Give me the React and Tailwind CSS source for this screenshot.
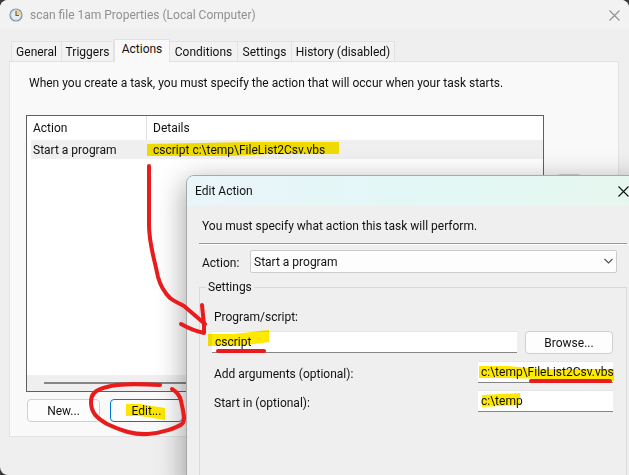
import React from "react";

const tabs = [
  { name: "General", width: "w-[51px]" },
  { name: "Triggers", width: "w-[52px]" },
  { name: "Actions", width: "w-[56px]", active: true },
  { name: "Conditions", width: "w-[68px]" },
  { name: "Settings", width: "w-[54px]" },
  { name: "History (disabled)", width: "w-[103px]" },
];

function ClockIcon() {
  return (
    <svg width="14" height="14" viewBox="0 0 14 14" aria-hidden="true">
      <circle cx="7" cy="7" r="6" fill="#e3edf3" stroke="#8b8f92" strokeWidth="1.2" />
      <path d="M7 7V2a5 5 0 0 1 5 5z" fill="#f6cf7a" />
      <circle cx="7" cy="7" r="4.8" fill="none" stroke="#c3d4df" strokeWidth="0.8" />
      <path d="M7 3v4.5h3" fill="none" stroke="#55616b" strokeWidth="1.1" />
    </svg>
  );
}

function CloseIcon() {
  return (
    <svg width="11" height="11" viewBox="0 0 11 11" aria-hidden="true">
      <path d="M0.5 0.5l10 10M10.5 0.5l-10 10" fill="none" stroke="currentColor" strokeWidth="1.1" />
    </svg>
  );
}

function Tabs() {
  return (
    <div role="tablist" className="flex h-[23px] items-end pl-[2px]">
      {tabs.map((tab) => (
        <button
          key={tab.name}
          type="button"
          role="tab"
          aria-selected={!!tab.active}
          className={
            tab.active
              ? `${tab.width} relative z-10 -mb-px h-[23px] shrink-0 border border-b-0 border-[#e2e2e2] bg-[#f9f9f9] pb-1 whitespace-nowrap`
              : `${tab.width} h-5 shrink-0 border border-b-0 border-l-0 border-[#e2e2e2] bg-[#f2f2f2] whitespace-nowrap first:border-l`
          }
        >
          {tab.name}
        </button>
      ))}
    </div>
  );
}

function ActionList() {
  return (
    <div className="flex h-[277px] flex-1 flex-col border border-[#606060] bg-white">
      <table className="w-full table-fixed border-separate border-spacing-0 text-left">
        <thead>
          <tr className="h-6">
            <th className="w-[120px] border-r border-[#e0e0e0] pl-[6px] font-normal">Action</th>
            <th className="pl-[6px] font-normal">Details</th>
          </tr>
        </thead>
        <tbody>
          <tr className="h-[19px]">
            <td className="border-l-4 border-white bg-[#efefef] pl-[2px]">Start a program</td>
            <td className="bg-[#efefef] pl-[6px]">cscript c:\temp\FileList2Csv.vbs</td>
          </tr>
        </tbody>
      </table>
      <div className="mt-auto flex h-4 items-center bg-[#efefef] pr-4 pl-[17px]">
        <div className="h-[2px] w-full bg-[#858585]" />
      </div>
    </div>
  );
}

function TaskProperties() {
  return (
    <section className="flex min-h-screen flex-col rounded-lg bg-[#efefef]">
      <header className="flex h-[30px] items-center rounded-t-lg bg-[#f2f2f2] pr-[9px] pl-[9px] text-[#909090]">
        <ClockIcon />
        <h1 className="ml-[7px] flex-1">scan file 1am Properties (Local Computer)</h1>
        <button type="button" aria-label="Close properties">
          <CloseIcon />
        </button>
      </header>
      <div className="pt-2 pr-[10px] pl-[9px]">
        <Tabs />
        <div className="border border-[#e2e2e2] bg-[#f9f9f9] pr-[10px] pb-[14px] pl-4">
          <p className="mt-3 ml-[3px] h-[41px] leading-[18px]">
            When you create a task, you must specify the action that will occur when your task starts.
          </p>
          <div className="flex gap-3">
            <ActionList />
            <button
              type="button"
              aria-label="Move up"
              className="mt-[59px] mr-[26px] h-6 w-[26px] rounded border border-[#d0d0d0] bg-[#fdfdfd]"
            />
          </div>
          <div className="mt-[7px] flex gap-[10px] pl-px">
            <button type="button" className="h-[23px] w-[73px] rounded border border-[#d0d0d0] bg-[#fdfdfd]">
              New...
            </button>
            <button type="button" className="h-[23px] w-[73px] rounded border border-[#0078d4] bg-[#fdfdfd]">
              Edit...
            </button>
          </div>
        </div>
      </div>
    </section>
  );
}

const field = "h-[22px] min-w-0 border-y border-t-[#e6e6e6] border-b-[#858585] bg-white pl-[3px] outline-none";

function EditAction() {
  return (
    <section
      role="dialog"
      aria-label="Edit Action"
      className="absolute top-[175px] -right-4 -bottom-4 left-[186px] flex flex-col overflow-hidden rounded-lg border border-[#a8a8a8] bg-[#efefef] shadow-[0_8px_28px_2px_rgba(0,0,0,0.35)]"
    >
      <header className="flex h-[30px] shrink-0 items-center bg-linear-to-r from-[#e9f5fa] via-[#e3f7f6] to-[#e6f7ee] pr-[15px] pl-2">
        <h2 className="flex-1">Edit Action</h2>
        <button type="button" aria-label="Close dialog">
          <CloseIcon />
        </button>
      </header>
      <div className="flex flex-1 flex-col pr-[17px] pl-3">
        <p className="mt-[11px] ml-[3px] h-[26px] leading-[18px]">You must specify what action this task will perform.</p>
        <hr className="h-[2px] border-0 border-t border-b border-t-[#999999] border-b-white" />
        <div className="mt-[5px] mr-[10px] flex items-center pl-[3px]">
          <label htmlFor="action" className="w-12 pt-[2px]">
            Action:
          </label>
          <div className="relative flex-1">
            <select
              id="action"
              className="h-[23px] w-full appearance-none rounded-xs border border-[#cccccc] bg-[#fdfdfd] pl-[3px] outline-none"
            >
              <option>Start a program</option>
            </select>
            <svg className="absolute top-2 right-1" width="9" height="7" viewBox="0 0 9 7" aria-hidden="true">
              <path d="M0.5 1l4 4 4-4" fill="none" stroke="#505050" strokeWidth="1.1" />
            </svg>
          </div>
        </div>
        <fieldset className="mt-[5px] min-w-0 flex-1 border border-[#d9d9d9] pr-[13px] pl-3">
          <legend className="-ml-[6px] px-[2px] leading-[18px]">Settings</legend>
          <label htmlFor="program" className="mt-3 ml-[2px] block leading-[18px]">
            Program/script:
          </label>
          <div className="mt-[5px] flex gap-2">
            <input id="program" defaultValue="cscript" className={`${field} flex-1`} />
            <button type="button" className="h-[23px] w-[88px] rounded border border-[#d0d0d0] bg-[#fdfdfd]">
              Browse...
            </button>
          </div>
          <div className="mt-[7px] flex items-center justify-between">
            <label htmlFor="arguments" className="ml-[2px] pt-[3px]">
              Add arguments (optional):
            </label>
            <input id="arguments" defaultValue="c:\temp\FileList2Csv.vbs" className={`${field} w-[135px]`} />
          </div>
          <div className="mt-[7px] flex items-center justify-between">
            <label htmlFor="start-in" className="ml-[2px] pt-[3px]">
              Start in (optional):
            </label>
            <input id="start-in" defaultValue="c:\temp" className={`${field} w-[135px]`} />
          </div>
        </fieldset>
      </div>
    </section>
  );
}

function Annotations() {
  return (
    <>
      <svg
        className="pointer-events-none absolute top-0 left-0 mix-blend-multiply"
        width="629"
        height="475"
        viewBox="0 0 629 475"
        aria-hidden="true"
      >
        <g fill="#ffe900">
          <path d="M147 144L250 142H339V154H268L230 156H147z" />
          <path d="M126 404H140L165 408V420L140 416H126z" />
          <path d="M208 334H232L269 330V342L238 346H208z" />
          <path d="M479 366H508L540 369H614V381H590L540 379L508 378H479z" />
          <path d="M482 395L520 393V405L482 407z" />
        </g>
      </svg>
      <svg
        className="pointer-events-none absolute top-0 left-0"
        width="629"
        height="475"
        viewBox="0 0 629 475"
        aria-hidden="true"
      >
        <g fill="none" stroke="#e81c1c" strokeWidth="4" strokeLinecap="round" strokeLinejoin="round">
          <path d="M149 166V225C149 244 154 257 158 277C161 288 166 294 170 298C175 302 179 303 184 306L205 324" />
          <path d="M202 305L204 325V333C195 331 188 328 181 324" />
          <path d="M160 385C140 384 118 383 107 387C94 390 91 395 91 402C91 413 97 418 107 424C122 431 134 435 148 434C162 433 176 428 182 424C186 421 183 410 181 401C180 395 177 392 172 389" />
          <path d="M218 351H264" />
          <path d="M531 381H610" />
        </g>
      </svg>
    </>
  );
}

export default function App() {
  return (
    <main className="relative min-h-screen overflow-hidden bg-[#3a3a3a] font-[Roboto,sans-serif] text-[12px] leading-[16px] text-[#111111]">
      <TaskProperties />
      <EditAction />
      <Annotations />
    </main>
  );
}
